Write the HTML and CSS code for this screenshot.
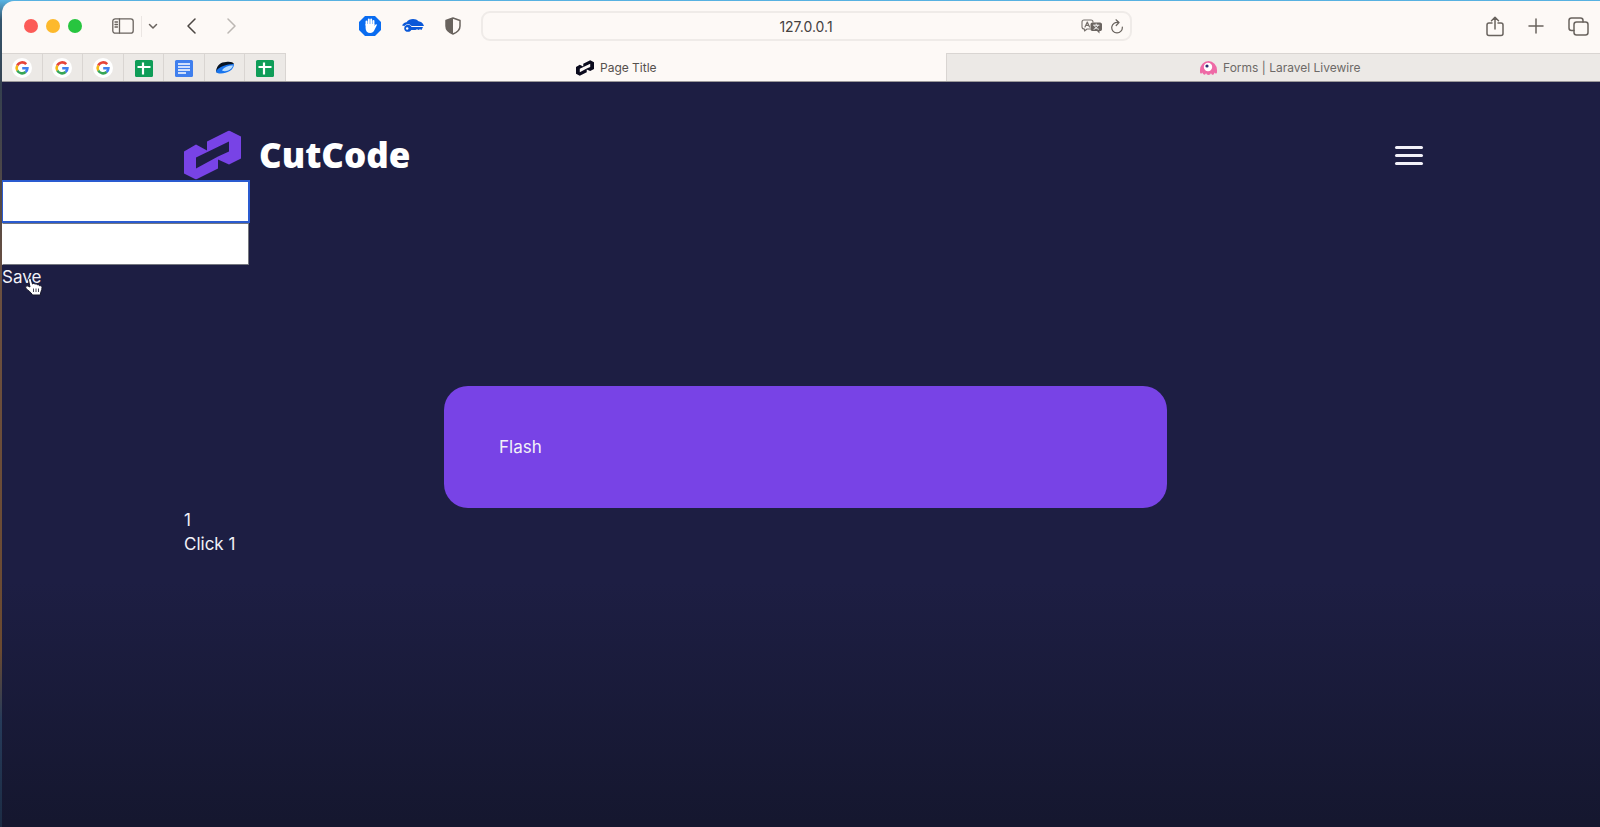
FILE: index.html
```html
<!DOCTYPE html>
<html lang="en">
<head>
<meta charset="utf-8">
<title>Page Title</title>
<link rel="stylesheet" href="styles.css">
</head>
<body>
<svg class="defs" aria-hidden="true">
  <defs>
    <symbol id="google" viewBox="0 0 20 20">
      <circle cx="10" cy="10" r="10" fill="#fff"/>
      <g fill="none" stroke-width="2.6">
        <path d="M14.2 6.2A5.4 5.4 0 0 0 5.3 7.5" stroke="#e6453a"/>
        <path d="M5.3 7.5A5.4 5.4 0 0 0 5.3 12.7" stroke="#f5b916"/>
        <path d="M5.3 12.5A5.4 5.4 0 0 0 13.6 14.1" stroke="#36a655"/>
        <path d="M13.6 14.1A5.4 5.4 0 0 0 15.4 10.3H10.2" stroke="#4080ee"/>
      </g>
    </symbol>
    <symbol id="sheet" viewBox="0 0 20 20">
      <rect x="1" y="2" width="18" height="17" rx="1.5" fill="#0f9d58"/>
      <path d="M9 4.500v12M3.500 9h13" stroke="#fff" stroke-width="2.200" fill="none"/>
    </symbol>
    <symbol id="chain" viewBox="0 0 57 49">
      <path fill-rule="evenodd" d="M0 21 12 14 23 20V11L45 0 57 6V28L45 34 34 29V38L12 49 0 43ZM12 27V38L34 26 45 21V11Z"/>
    </symbol>
  </defs>
</svg>
<div class="window">
  <header class="toolbar">
    <div class="tools-left">
      <div class="lights"><span class="light red"></span><span class="light amber"></span><span class="light green"></span></div>
      <button class="tool sidebar" aria-label="Sidebar"><svg width="22" height="16" viewBox="0 0 22 16"><rect x=".8" y=".8" width="20.400" height="14.400" rx="2.500"/><path d="M7.500 1v14M3 4h2.500M3 6.500h2.500M3 9h2.500"/></svg></button>
      <button class="tool chevron" aria-label="Tab groups"><svg width="10" height="7" viewBox="0 0 10 7"><path d="m1.500 1.500 3.500 3.500 3.500-3.500"/></svg></button>
      <button class="tool back" aria-label="Back"><svg width="10" height="16" viewBox="0 0 10 16"><path d="M9 1 2 8l7 7"/></svg></button>
      <button class="tool forward" aria-label="Forward"><svg width="10" height="16" viewBox="0 0 10 16"><path d="m1 1 7 7-7 7"/></svg></button>
      <div class="extensions">
        <button class="tool" aria-label="Ad blocker"><svg class="plain" width="22" height="20" viewBox="0 0 22 20"><path fill="#0a6cf0" d="M6 0h10l6 6v8l-6 6H6l-6-6V6Z"/><path d="M7.500 9V5.500M9.800 8.500V3.500M12.200 8.500V3.500M14.500 9V5" stroke="#fff" stroke-width="1.900" stroke-linecap="round"/><path fill="#fff" d="M6.600 8h8.800v2l1.200-1.400c.8-.6 1.500 0 1.200.7l-2.500 5c-1 2-2 2.700-4 2.700-3 0-4.700-2-4.700-5Z"/></svg></button>
        <button class="tool" aria-label="Passwords"><svg class="plain" width="22" height="14" viewBox="0 0 22 14"><path fill="#0a58d8" d="M0 6.500C1 4.500 2.500 3.500 4.500 3.200 6 .8 8.500 0 11 0c2.500 0 4 .8 5.500 2.300C19 2.500 21 4 22 7H9.500C8 4.500 4 4.500 2.500 7Z"/><path fill="#0a58d8" d="M2.200 9.500c0-4.500 6-4.800 7.300-1.500H21l-1.500 3-1.500-.8-1.500.8-1.500-.8-1.500.8H9.300c-1.600 3-7.100 2.300-7.100-1.500Z"/><circle cx="5.200" cy="9.500" r="1.200" fill="#fff"/></svg></button>
        <button class="tool" aria-label="Privacy report"><svg class="plain" width="16" height="18" viewBox="0 0 16 18"><path d="M8 1 15 3.500V9c0 4-3 6.500-7 8-4-1.500-7-4-7-8V3.500Z" fill="none" stroke="#69635e" stroke-width="1.500"/><path d="M8 1v16C4 15.500 1 13 1 9V3.500Z" fill="#69635e"/></svg></button>
      </div>
    </div>
    <div class="address">
      <input class="url" type="text" value="127.0.0.1" aria-label="Address">
      <div class="address-tools">
        <button class="tool" aria-label="Translate"><svg class="plain" width="22" height="15" viewBox="0 0 22 15"><path d="M9 10H6l-2.500 2v-2C1.500 10 1 9 1 8V3c0-1.500.7-2 2-2h7c1.500 0 2 1 2 2" fill="none" stroke="#77716d" stroke-width="1.100"/><path d="m4 8 2.300-5L8.500 8M5 6.300h3" fill="none" stroke="#77716d"/><path d="M11.500 3.500h7.500c1.500 0 2 1 2 2V10c0 1.500-.7 2-2 2h-.5v2.500L16 12h-4.500c-1.500 0-2-1-2-2V5.500c0-1 .5-2 2-2Z" fill="#6b6561"/><path d="M12.500 6.200h5.500M15.200 5v1M16.800 6.500c-.5 2-2 3-3.800 3.700M13.700 7c.5 1.500 1.800 2.600 3.800 3.200" stroke="#fff" stroke-width=".9" fill="none"/></svg></button>
        <button class="tool" aria-label="Reload"><svg width="14" height="15" viewBox="0 0 14 15"><path d="M8.500 3.500A5.300 5.300 0 1 0 12.300 8M6 .8l3 2.700-2.800 3"/></svg></button>
      </div>
    </div>
    <div class="tools-right">
      <button class="tool" aria-label="Share"><svg width="18" height="21" viewBox="0 0 18 21"><path d="M6 7H3C1.500 7 1 8 1 9v8.500c0 1.500.7 2 2 2h12c1.300 0 2-.5 2-2V9c0-1-.5-2-2-2h-3M9 13V1.500M5.500 4.800 9 1.300l3.500 3.500"/></svg></button>
      <button class="tool" aria-label="New tab"><svg width="16" height="16" viewBox="0 0 16 16"><path d="M8 1v14M1 8h14"/></svg></button>
      <button class="tool" aria-label="Tab overview"><svg width="21" height="19" viewBox="0 0 21 19"><rect x="6" y="5" width="14" height="13" rx="2.500"/><path d="M6 13.500H3.500C2 13.500 1 13 1 11V3.500C1 2 2 1 3.500 1h9C14 1 15 2 15 3.500V5"/></svg></button>
    </div>
  </header>
  <nav class="tabs" aria-label="Tabs">
    <div class="pins">
      <button class="pin" aria-label="Google"><svg width="20" height="20"><use href="#google"/></svg></button>
      <button class="pin" aria-label="Google"><svg width="20" height="20"><use href="#google"/></svg></button>
      <button class="pin" aria-label="Google"><svg width="20" height="20"><use href="#google"/></svg></button>
      <button class="pin" aria-label="Sheets"><svg width="20" height="20"><use href="#sheet"/></svg></button>
      <button class="pin" aria-label="Docs"><svg width="20" height="20" viewBox="0 0 20 20"><rect x="1" y="2" width="18" height="17" rx="1.500" fill="#3f7fee"/><path d="M4 6h12M4 9h12M4 12h12M4 15h8" stroke="#fff" stroke-width="1.500"/></svg></button>
      <button class="pin" aria-label="Analytics"><svg width="20" height="20" viewBox="0 0 20 20"><path d="M1 13C2 7 6 4 11 4c4-.5 7 0 8 2L9 10l-7 5Z" fill="#071322"/><path d="M1 13C4 9 11 6 19 6c0 6-7 9.500-13 9.500-3 0-5-.5-5-2.500Z" fill="#1975ee"/><path d="M7 12.500c2-3.500 6-5 11-5-1 4-7 7-11 5Z" fill="#b8dcff"/></svg></button>
      <button class="pin" aria-label="Sheets"><svg width="20" height="20"><use href="#sheet"/></svg></button>
    </div>
    <button class="tab active"><svg width="18" height="16" fill="#0b0b1d"><use href="#chain"/></svg>Page Title</button>
    <button class="tab idle"><svg width="17" height="14" viewBox="0 0 17 14"><path d="M0 9a8.500 9 0 0 1 17 0v2c0 2-2 2-2.500.5-.5 3-3 3-3.500.5-.5 2.500-4.500 2.500-5 0-.5 2.500-3 2-3.500-.5C2 13 0 13 0 11Z" fill="#ee6aa6"/><circle cx="8" cy="6" r="4.200" fill="#fff"/><circle cx="7" cy="5" r="1.600" fill="#2b2c70"/></svg>Forms | Laravel Livewire</button>
  </nav>
  <main class="page">
    <div class="container masthead">
      <a class="brand" href="#"><svg width="57" height="50" viewBox="0 0 57 49" fill="#7843e6"><use href="#chain"/></svg>CutCode</a>
      <button class="menu" aria-label="Menu"><span class="bar"></span><span class="bar"></span><span class="bar"></span></button>
    </div>
    <form class="form">
      <input class="field focused" type="text" aria-label="Title">
      <input class="field" type="text" aria-label="Text">
      <button class="text-button save" type="button">Save<svg class="cursor" width="18" height="19" viewBox="0 0 18 19"><path d="M5 10 3.500 3c0-2 2.200-2.300 2.700-.5L7.500 7c1-1 2-.7 2.400.2 1-.7 2-.3 2.400.6 1-.4 2 0 2.200 1 1.500-.3 2.500.3 2.500 1.700 0 3-1.500 4-1.700 7.500H7.500c-1.500-3-4-4-6.500-6.500C0 9.500 1.500 8.300 3 9Z" fill="#fff" stroke="#17172a"/><path d="M8.500 11.500v3.500M11 11.500v3.500M13.500 11.500v3.500" stroke="#17172a" stroke-width=".8"/></svg></button>
    </form>
    <div class="container">
      <div class="flash" role="status">Flash</div>
      <div class="counter">1</div>
      <button class="text-button" type="button">Click 1</button>
    </div>
  </main>
</div>
</body>
</html>
```
FILE: styles.css
```css
* { box-sizing: border-box; }
body {
  margin: 0;
  min-height: 100vh;
  display: flex;
  padding: 1px 0 0 2px;
  background: linear-gradient(#58b4e4 0, #35566e 20px, #35404e 90px, #6b5040 280px, #6b4a30 650px, #263b5a 720px, #1c2c44);
  font-family: Inter, "Liberation Sans", sans-serif;
}
button, input { font: inherit; color: inherit; margin: 0; }
button { border: 0; background: none; padding: 0; }
svg { display: block; flex: none; }
.defs { position: absolute; width: 0; height: 0; }
.window {
  flex: 1;
  display: flex;
  flex-direction: column;
  border-radius: 12px 0 0 0;
  overflow: hidden;
  background: #fdf9f6;
}
.toolbar {
  display: grid;
  grid-template-columns: 479px 1fr 468px;
  align-items: center;
  height: 52px;
  padding-bottom: 2px;
}
.tools-left { display: flex; align-items: center; padding-left: 22px; }
.lights { display: flex; gap: 8px; margin-right: 30px; }
.light { width: 14px; height: 14px; border-radius: 50%; }
.red { background: #fc5b57; }
.amber { background: #fdb92c; }
.green { background: #27c53f; }
.tool svg { fill: none; stroke: #69635e; stroke-width: 1.5; stroke-linecap: round; stroke-linejoin: round; }
.tool svg.plain { stroke: none; }
.sidebar { margin-right: 7px; }
.sidebar svg { stroke-width: 1.3; }
.chevron { border-left: 1px solid #ebe6e3; padding: 7px 0 7px 6px; margin-right: 28px; }
.back { margin-right: 31px; }
.back svg { stroke: #4b4642; }
.forward svg { stroke: #bcb7b3; }
.extensions { display: flex; align-items: center; gap: 21px; margin-left: 122px; }
.address {
  display: flex;
  align-items: center;
  height: 30px;
  border: 2px solid #efebe8;
  border-radius: 9px;
  padding-right: 6px;
}
.url {
  flex: 1;
  min-width: 0;
  border: 0;
  outline: 0;
  background: none;
  text-align: center;
  padding: 0 0 0 48px;
  font-size: 14px;
  color: #45413f;
}
.address-tools { display: flex; align-items: center; gap: 7px; }
.address-tools svg { stroke-width: 1.2; }
.tools-right { display: flex; align-items: center; justify-content: flex-end; gap: 24px; padding-right: 11px; }
.tabs { display: flex; height: 29px; border-bottom: 1px solid #9b999a; }
.pins { display: flex; width: 284px; }
.pin {
  flex: 1;
  display: flex;
  align-items: center;
  justify-content: center;
  background: #ece9e6;
  border: solid #d9d5d2;
  border-width: 1px 1px 0 0;
}
.tab {
  flex: 1;
  display: flex;
  align-items: center;
  justify-content: center;
  gap: 6px;
  background: #ece9e6;
  border: solid #d9d5d2;
  border-width: 1px 0 0 1px;
  font-size: 12px;
  color: #6d6967;
}
.tab.active { flex-grow: 1.03; background: none; border-color: transparent; color: #55504d; }
.tab.idle { padding-left: 14px; }
.page {
  flex: 1;
  background: linear-gradient(#1d1e43, #1d1e43 500px, #15172f 740px);
  color: #f2f1f8;
  font-size: 17px;
  line-height: 24px;
}
.container { padding: 0 177px 0 182px; }
.masthead { display: flex; justify-content: space-between; align-items: center; padding-top: 48px; }
.brand {
  display: flex;
  align-items: center;
  gap: 18px;
  color: #fff;
  text-decoration: none;
  font: 800 35px/50px "Open Sans", sans-serif;
}
.menu { display: grid; gap: 5px; }
.bar { width: 28px; height: 3px; border-radius: 2px; background: #f2f1f8; }
.form { display: flex; flex-direction: column; align-items: flex-start; }
.field {
  width: 247px;
  height: 42px;
  border: 1px solid #75777f;
  border-left-color: #fff;
  background: #fff;
  color: #1d1e43;
  padding: 8px 12px;
  outline: 0;
}
.field.focused { width: 248px; height: 43px; border: 2px solid #2a5bd0; border-left-width: 1px; }
.text-button { display: block; text-align: left; }
.save { position: relative; }
.cursor { position: absolute; left: 23px; top: 12px; }
.flash {
  margin: 97px 256px 0 260px;
  padding: 49px 55px;
  border-radius: 24px;
  background: #7843e6;
}
```
